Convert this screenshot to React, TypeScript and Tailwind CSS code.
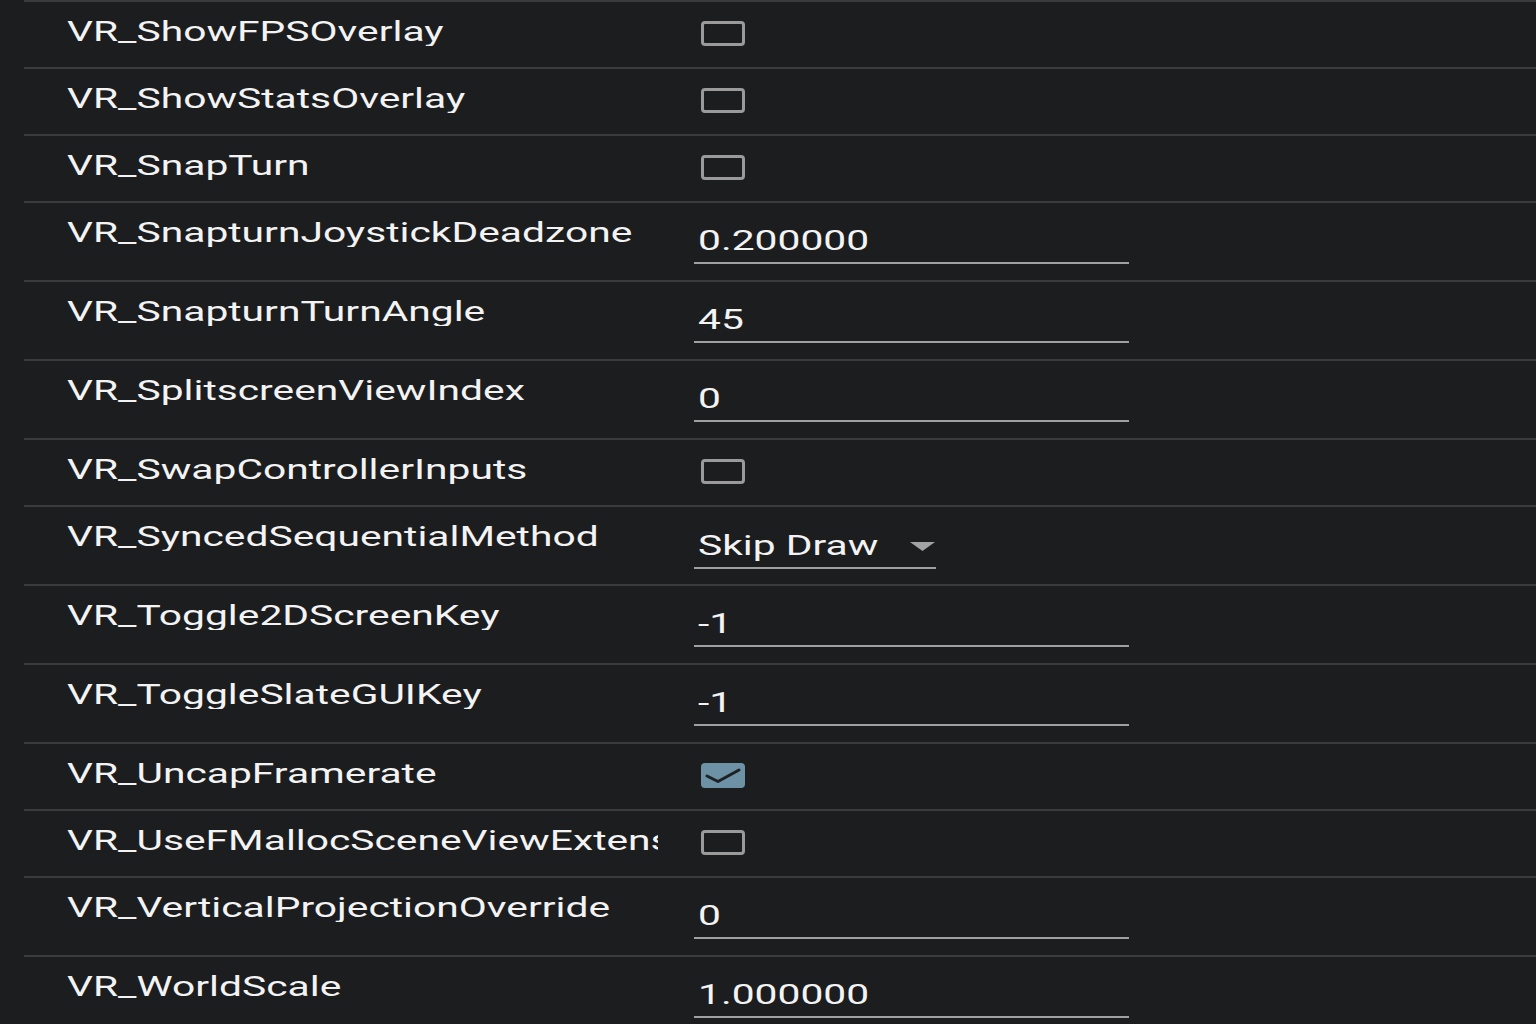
import React from 'react';

type Row =
  | { name: string; kind: 'check'; checked: boolean }
  | { name: string; kind: 'text'; value: string }
  | { name: string; kind: 'select'; value: string };

const rows: Row[] = [
  { name: 'VR_ShowFPSOverlay', kind: 'check', checked: false },
  { name: 'VR_ShowStatsOverlay', kind: 'check', checked: false },
  { name: 'VR_SnapTurn', kind: 'check', checked: false },
  { name: 'VR_SnapturnJoystickDeadzone', kind: 'text', value: '0.200000' },
  { name: 'VR_SnapturnTurnAngle', kind: 'text', value: '45' },
  { name: 'VR_SplitscreenViewIndex', kind: 'text', value: '0' },
  { name: 'VR_SwapControllerInputs', kind: 'check', checked: false },
  { name: 'VR_SyncedSequentialMethod', kind: 'select', value: 'Skip Draw' },
  { name: 'VR_Toggle2DScreenKey', kind: 'text', value: '-1' },
  { name: 'VR_ToggleSlateGUIKey', kind: 'text', value: '-1' },
  { name: 'VR_UncapFramerate', kind: 'check', checked: true },
  { name: 'VR_UseFMallocSceneViewExtensionAllocator', kind: 'check', checked: false },
  { name: 'VR_VerticalProjectionOverride', kind: 'text', value: '0' },
  { name: 'VR_WorldScale', kind: 'text', value: '1.000000' },
];

// the whole capture is stretched sideways, so text gets the same stretch
function Wide({ children }: { children: React.ReactNode }) {
  return (
    <span className="inline-block origin-left scale-x-[1.51] whitespace-nowrap">{children}</span>
  );
}

function CheckBox({ checked }: { checked: boolean }) {
  if (checked) {
    return (
      <div className="ml-[7px] mt-[2px] h-[25px] w-[44px] rounded-[4px] bg-[#6d92a6]">
        <svg width="44" height="25" viewBox="0 0 44 25">
          <path d="M6 13 L17 18.5 L38 7" fill="none" stroke="#1e2225" strokeWidth="3" strokeLinecap="round" strokeLinejoin="round" />
        </svg>
      </div>
    );
  }
  return <div className="ml-[7px] mt-[2px] h-[25px] w-[44px] rounded-[4px] border-[3px] border-[#9a9a9a]" />;
}

function Control({ row }: { row: Row }) {
  if (row.kind === 'check') return <CheckBox checked={row.checked} />;
  if (row.kind === 'select') {
    return (
      <div className="mt-[9px] flex w-[242px] items-center justify-between border-b-2 border-[#a0a0a0] pb-[7px] pl-[4px] pr-[1px]">
        <span className="leading-[27px]">
          <Wide>{row.value}</Wide>
        </span>
        <svg width="25" height="9" viewBox="0 0 25 9">
          <path d="M0 0 H25 L12.5 9 Z" fill="#a3a3a3" />
        </svg>
      </div>
    );
  }
  return (
    <div className="mt-[8px] w-[435px] border-b-2 border-[#a0a0a0] pb-[7px] pl-[4px] leading-[27px]">
      <Wide>{row.value}</Wide>
    </div>
  );
}

export default function App() {
  return (
    <div className="h-[1024px] w-[1536px] overflow-hidden bg-[#1c1d1f] text-[27px] text-[#f3f3f3] [font-family:Roboto,'Liberation_Sans',sans-serif]">
      <div className="ml-[24px]">
        {rows.map((row) => (
          <div
            key={row.name}
            className={`flex items-start border-t-2 border-[#3a3b3d] pl-[43px] pt-[17px] ${
              row.kind === 'check' ? 'h-[67px]' : 'h-[79px]'
            }`}
          >
            <div className="w-[591px] shrink-0 overflow-hidden leading-[27px]">
              <Wide>{row.name}</Wide>
            </div>
            <div className="ml-[36px]">
              <Control row={row} />
            </div>
          </div>
        ))}
      </div>
    </div>
  );
}
